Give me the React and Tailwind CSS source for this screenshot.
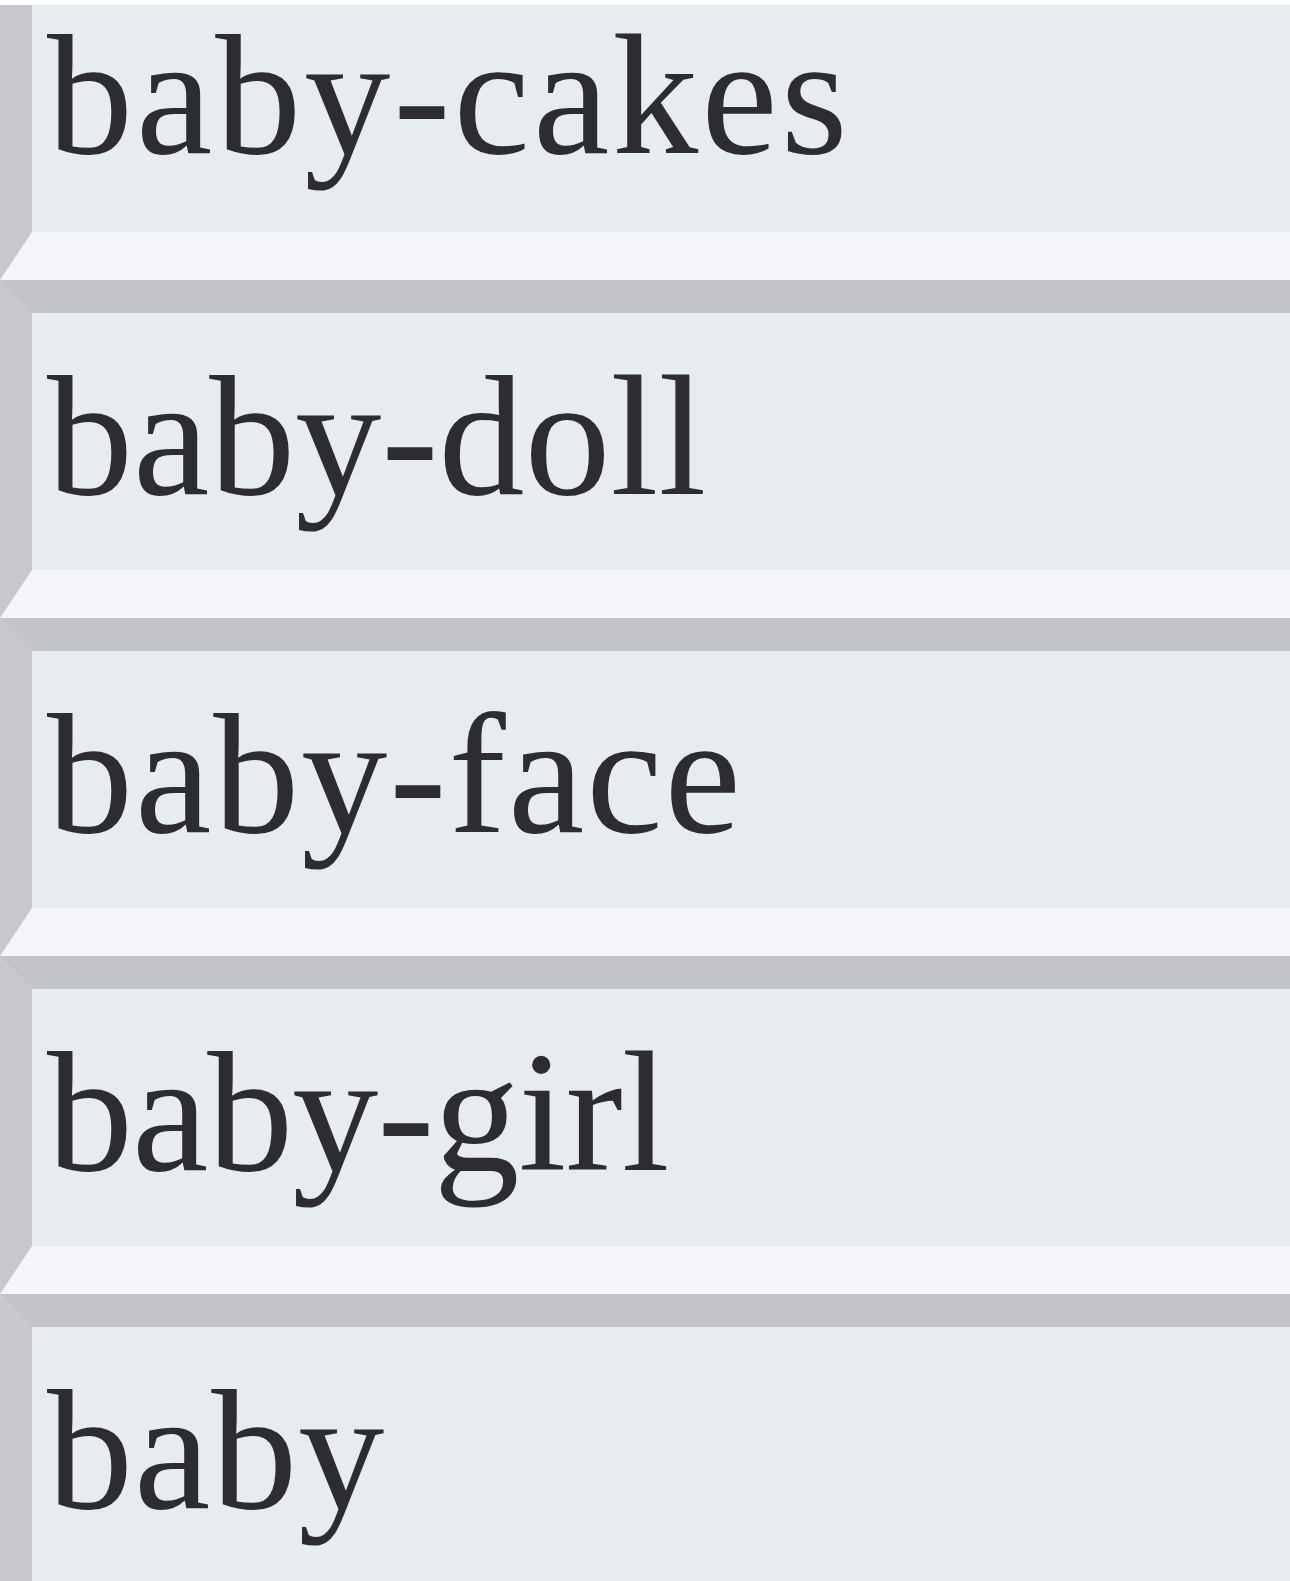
const items = [
  { t: "baby-doll", ls: "tracking-[0px]" },
  { t: "baby-face", ls: "tracking-[2px]" },
  { t: "baby-girl", ls: "tracking-[-1px]" },
  { t: "baby", ls: "tracking-[1px]" },
];

function Row({ label, first, ls }) {
  return (
    <div
      className={
        first
          ? "w-[1400px] h-[275px] border-l-[32px] border-b-[48px] border-l-[#c7c8cb] border-b-[#f3f5f8] bg-[#e6ecef]"
          : "w-[1400px] h-[338px] border-l-[32px] border-t-[33px] border-b-[48px] border-l-[#c7c8cb] border-t-[#c3c4c7] border-b-[#f3f5f8] bg-[#e6ecef]"
      }
    >
      <div
        className={
          (first
            ? "pl-[15px] pt-[4px] "
            : "pl-[15px] pt-[37px] ") +
          "text-[172px] leading-none text-[#2d2d31] whitespace-nowrap blur-[0.5px] " +
          ls
        }
        style={{ fontFamily: '"Liberation Serif", "Times New Roman", serif' }}
      >
        {label}
      </div>
    </div>
  );
}

export default function App() {
  return (
    <div className="w-[1290px] h-[1581px] overflow-hidden bg-white">
      <div className="h-[5px] bg-white" />
      <Row label="baby-cakes" first ls="tracking-[3px]" />
      {items.map((it) => (
        <Row key={it.t} label={it.t} ls={it.ls} />
      ))}
    </div>
  );
}
